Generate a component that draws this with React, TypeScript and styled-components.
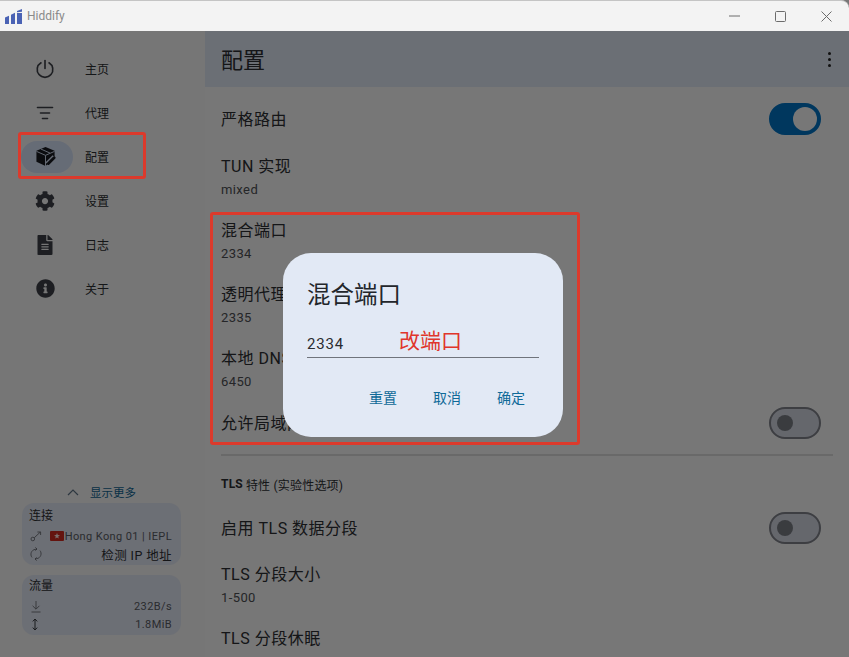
import React from "react";
import styled, { createGlobalStyle } from "styled-components";
import { FaCog, FaFileAlt, FaInfoCircle } from "react-icons/fa";

const FONT = `Roboto, "Noto Sans CJK SC", sans-serif`;

const GlobalStyle = createGlobalStyle`
  html, body {
    margin: 0;
    padding: 0;
    width: 849px;
    height: 657px;
    overflow: hidden;
    background: #777;
  }
  * { box-sizing: border-box; }
`;

const Window = styled.div`
  position: relative;
  width: 849px;
  height: 657px;
  display: flex;
  flex-direction: column;
  overflow: hidden;
  font-family: ${FONT};
  color: #2a2c30;
`;

const TitleBar = styled.div`
  height: 31px;
  flex: none;
  display: flex;
  align-items: center;
  background: #f3f3f3;
  border-top: 1px solid #c4c4c4;
  border-top-right-radius: 8px;
  padding-left: 5px;
  position: relative;
  z-index: 3;
`;

const AppName = styled.span`
  margin-left: 5px;
  font-size: 12px;
  color: #8a8a8a;
`;

const WindowControls = styled.div`
  margin-left: auto;
  display: flex;
  color: #6c6c6c;
`;

const WindowControl = styled.div`
  width: 46px;
  height: 30px;
  display: flex;
  align-items: center;
  justify-content: center;
`;

const Body = styled.div`
  flex: 1;
  min-height: 0;
  display: flex;
`;

const Sidebar = styled.aside`
  width: 205px;
  flex: none;
  display: flex;
  flex-direction: column;
  background: #ececec;
  padding: 16px 0 22px;
`;

const NavList = styled.nav`
  display: flex;
  flex-direction: column;
`;

const NavItem = styled.div`
  height: 44px;
  display: flex;
  align-items: center;
  padding-left: 21px;
  padding-bottom: 1px;
  font-size: 12px;
`;

const NavIcon = styled.div<{ $active?: boolean }>`
  width: 52px;
  height: 32px;
  border-radius: 16px;
  display: flex;
  align-items: center;
  justify-content: center;
  padding-right: 4px;
  margin-right: 12px;
  background: ${(p) => (p.$active ? "#cdd8ec" : "transparent")};
  color: #3a3d44;
`;

const BottomArea = styled.div`
  margin-top: auto;
  padding: 0 24px 0 22px;
  display: flex;
  flex-direction: column;
`;

const MoreLink = styled.div`
  height: 22px;
  display: flex;
  align-items: center;
  justify-content: center;
  gap: 11px;
  font-size: 11.5px;
  color: #0f5f8c;
`;

const StatsCard = styled.div<{ $tight?: boolean }>`
  border-radius: 12px;
  background: #d9deea;
  padding: ${(p) => (p.$tight ? "3px 9px 2px 8px" : "5px 9px 2px 8px")};
  margin-bottom: 10px;
  &:last-child { margin-bottom: 0; }
`;

const CardTitle = styled.div`
  font-size: 12px;
  line-height: 17px;
  margin-bottom: 2px;
  margin-left: -1px;
`;

const StatRow = styled.div`
  display: flex;
  align-items: center;
  justify-content: space-between;
  height: 18px;
  font-size: 11px;
  letter-spacing: 0.4px;
  color: #55585e;
`;

const StatIcon = styled.span`
  display: flex;
  width: 14px;
  color: #666a70;
`;

const StatValue = styled.span<{ $dark?: boolean }>`
  display: flex;
  align-items: center;
  gap: 1px;
  font-size: ${(p) => (p.$dark ? 12.5 : 11)}px;
  color: ${(p) => (p.$dark ? "#2a2c30" : "#55585e")};
`;

const Main = styled.main`
  flex: 1;
  min-width: 0;
  display: flex;
  flex-direction: column;
  background: #eeeeee;
  overflow: hidden;
`;

const Header = styled.header`
  height: 56px;
  flex: none;
  display: flex;
  align-items: center;
  justify-content: space-between;
  padding: 0 16px;
  background: #d7deea;
`;

const HeaderTitle = styled.div`
  font-size: 22px;
  margin-bottom: 3px;
`;

const Dots = styled.div`
  display: flex;
  flex-direction: column;
  gap: 3px;
  margin-right: 2.5px;
  span {
    width: 3px;
    height: 3px;
    border-radius: 50%;
    background: #222;
  }
`;

const SettingsList = styled.div`
  flex: 1;
  padding-top: 5px;
  display: flex;
  flex-direction: column;
`;

const Row = styled.div<{ $h: number }>`
  flex: none;
  height: ${(p) => p.$h}px;
  display: flex;
  align-items: center;
  justify-content: space-between;
  padding: 0 28px 0 16px;
  font-size: 16px;
  letter-spacing: 0.5px;
`;

const RowLabel = styled.span`
  margin-bottom: 2px;
`;

const RowText = styled.div`
  display: flex;
  flex-direction: column;
  gap: 3px;
`;

const RowTitle = styled.div`
  line-height: 20px;
`;

const RowValue = styled.div`
  font-size: 13px;
  line-height: 20px;
  letter-spacing: 0.4px;
  color: #4a4c50;
`;

const Divider = styled.hr`
  flex: none;
  border: 0;
  height: 2px;
  margin: 10px 16px 17px;
  background: #d2d2d2;
`;

const SectionTitle = styled.div`
  flex: none;
  height: 22px;
  display: flex;
  align-items: center;
  padding-left: 16px;
  margin-bottom: 6px;
  font-size: 12px;
  letter-spacing: 0.2px;
  b { font-weight: 700; margin-right: 3px; }
`;

const Switch = styled.div<{ $on?: boolean }>`
  width: 52px;
  height: 32px;
  flex: none;
  border-radius: 16px;
  display: flex;
  align-items: center;
  background: ${(p) => (p.$on ? "#016fbd" : "#cbced9")};
  border: 2px solid ${(p) => (p.$on ? "#016fbd" : "#7a7d85")};
  justify-content: ${(p) => (p.$on ? "flex-end" : "flex-start")};
  padding: ${(p) => (p.$on ? "0 2px" : "0 6px")};
  &::after {
    content: "";
    display: block;
    width: ${(p) => (p.$on ? 24 : 16)}px;
    height: ${(p) => (p.$on ? 24 : 16)}px;
    border-radius: 50%;
    background: ${(p) => (p.$on ? "#eeeeee" : "#74787f")};
  }
`;

const Scrim = styled.div`
  position: absolute;
  left: 0;
  right: 0;
  top: 31px;
  bottom: 0;
  background: rgba(0, 0, 0, 0.5);
`;

const Dialog = styled.div`
  position: absolute;
  left: 283px;
  top: 253px;
  width: 280px;
  height: 184px;
  border-radius: 28px;
  background: #e2e9f5;
  padding: 25px 24px 24px;
  display: flex;
  flex-direction: column;
`;

const DialogTitle = styled.div`
  font-size: 23.5px;
  line-height: 34px;
  color: #23262b;
`;

const Field = styled.div`
  margin-top: 14px;
  height: 32px;
  padding-top: 8px;
  border-bottom: 1px solid #70747c;
  font-size: 15px;
  line-height: 20px;
  letter-spacing: 0.8px;
  color: #2a2c30;
`;

const DialogActions = styled.div`
  margin-top: auto;
  margin-bottom: 5px;
  display: flex;
  justify-content: flex-end;
  gap: 36px;
  padding-right: 14px;
  font-size: 14px;
  line-height: 20px;
  color: #0f6a98;
`;

const FieldNote = styled.div`
  position: absolute;
  left: 399px;
  top: 327px;
  font-size: 21px;
  line-height: 28px;
  color: #e0352b;
`;

const Callout = styled.div<{ $x: number; $y: number; $w: number; $h: number }>`
  position: absolute;
  left: ${(p) => p.$x}px;
  top: ${(p) => p.$y}px;
  width: ${(p) => p.$w}px;
  height: ${(p) => p.$h}px;
  border: 3px solid #dc3a2c;
  border-radius: 3px;
`;

const Logo = () => (
  <svg width="17" height="15" viewBox="0 0 17 15">
    <g fill="#4a62b4">
      <path d="M0 8.6 L4 6.8 V15 H0 Z" />
      <path d="M6 5.8 L10 3.8 V15 H6 Z" />
      <rect x="12" y="4" width="5" height="11" />
      <path d="M12 2 L17 0 V2.8 L12 3.2 Z" />
    </g>
  </svg>
);

const PowerIcon = () => (
  <svg width="20" height="20" viewBox="0 0 22 22" fill="none" stroke="currentColor" strokeWidth="1.8" strokeLinecap="round">
    <path d="M6.6 4.2 A8.6 8.6 0 1 0 15.4 4.2" />
    <path d="M11 1.6 V10.4" />
  </svg>
);

const FilterIcon = () => (
  <svg width="20" height="16" viewBox="0 0 20 16" stroke="currentColor" strokeWidth="1.6" strokeLinecap="round">
    <path d="M2.5 2.5 H17.5" />
    <path d="M5.5 8 H14.5" />
    <path d="M7.5 13.5 H12.5" />
  </svg>
);

const BoxEditIcon = () => (
  <svg width="21" height="21" viewBox="0 0 22 22" fill="none">
    <path fill="#16181e" d="M11 1 L20.5 5 V13 L11 21 L1.5 16.5 V5 Z" />
    <path stroke="#cdd8ec" strokeWidth="1" d="M1.5 5.6 L11 9.8 L20.5 5.6 M11 9.8 V21 M6.2 3.2 L15.8 7.4" />
    <path stroke="#cdd8ec" strokeWidth="5.4" d="M20.4 11.6 L13 19" />
    <path stroke="#16181e" strokeWidth="3" strokeLinecap="round" d="M20 12.4 L14 18.4" />
  </svg>
);

const ChevronUp = () => (
  <svg width="12" height="8" viewBox="0 0 12 8" fill="none" stroke="#5b6f80" strokeWidth="1.2">
    <path d="M1 7 L6 2 L11 7" />
  </svg>
);

const LinkIcon = () => (
  <svg width="12" height="12" viewBox="0 0 12 12" fill="none" stroke="currentColor" strokeWidth="0.9">
    <circle cx="2.8" cy="9" r="1.8" />
    <path d="M4.2 7.8 L10.4 2 M7.4 2 H10.6 V5" />
  </svg>
);

const RefreshIcon = () => (
  <svg width="12" height="14" viewBox="0 0 12 14" fill="none" stroke="currentColor" strokeWidth="0.9">
    <path d="M2 10.4 A5 5 0 0 1 5 2.4 L7 2 M5.4 0.4 L7 2 L5.4 3.6" />
    <path d="M10 3.6 A5 5 0 0 1 7 11.6 L5 12 M6.6 10.4 L5 12 L6.6 13.6" />
  </svg>
);

const DownIcon = () => (
  <svg width="12" height="13" viewBox="0 0 12 13" fill="none" stroke="currentColor" strokeWidth="0.9">
    <path d="M6 1 V9 M2.6 5.8 L6 9.2 L9.4 5.8 M1.5 12 H10.5" />
  </svg>
);

const UpDownIcon = () => (
  <svg width="12" height="13" viewBox="0 0 12 13" fill="none" stroke="#33363b" strokeWidth="1">
    <path d="M5 1 V12 M2.8 3.4 L5 1 L7.2 3.4 M2.8 9.6 L5 12 L7.2 9.6" />
  </svg>
);

const HongKongFlag = () => (
  <svg width="14" height="10" viewBox="0 0 14 10">
    <rect width="14" height="10" rx="1" fill="#c8281e" />
    <path d="M7 2 L7.8 4 L10 4.2 L8.2 5.4 L8.8 7.6 L7 6.4 L5.2 7.6 L5.8 5.4 L4 4.2 L6.2 4 Z" fill="#f4dcd8" />
  </svg>
);

const navItems = [
  { label: "主页", icon: <PowerIcon /> },
  { label: "代理", icon: <FilterIcon /> },
  { label: "配置", icon: <BoxEditIcon />, active: true },
  { label: "设置", icon: <FaCog size={20} /> },
  { label: "日志", icon: <FaFileAlt size={20} /> },
  { label: "关于", icon: <FaInfoCircle size={19} /> },
];

const App: React.FC = () => {
  return (
    <Window>
      <GlobalStyle />
      <TitleBar>
        <Logo />
        <AppName>Hiddify</AppName>
        <WindowControls>
          <WindowControl>
            <svg width="11" height="2" viewBox="0 0 11 2" stroke="currentColor"><path d="M0 1 H11" /></svg>
          </WindowControl>
          <WindowControl>
            <svg width="11" height="11" viewBox="0 0 11 11" fill="none" stroke="currentColor"><rect x="0.5" y="0.5" width="10" height="10" rx="1" /></svg>
          </WindowControl>
          <WindowControl>
            <svg width="11" height="11" viewBox="0 0 11 11" stroke="currentColor"><path d="M0.5 0.5 L10.5 10.5 M10.5 0.5 L0.5 10.5" /></svg>
          </WindowControl>
        </WindowControls>
      </TitleBar>

      <Body>
        <Sidebar>
          <NavList>
            {navItems.map((item) => (
              <NavItem key={item.label}>
                <NavIcon $active={item.active}>{item.icon}</NavIcon>
                {item.label}
              </NavItem>
            ))}
          </NavList>

          <BottomArea>
            <MoreLink>
              <ChevronUp />
              显示更多
            </MoreLink>
            <StatsCard>
              <CardTitle>连接</CardTitle>
              <StatRow>
                <StatIcon><LinkIcon /></StatIcon>
                <StatValue><HongKongFlag />Hong Kong 01 | IEPL</StatValue>
              </StatRow>
              <StatRow>
                <StatIcon><RefreshIcon /></StatIcon>
                <StatValue $dark>检测 IP 地址</StatValue>
              </StatRow>
            </StatsCard>
            <StatsCard $tight>
              <CardTitle>流量</CardTitle>
              <StatRow>
                <StatIcon><DownIcon /></StatIcon>
                <StatValue>232B/s</StatValue>
              </StatRow>
              <StatRow>
                <StatIcon><UpDownIcon /></StatIcon>
                <StatValue>1.8MiB</StatValue>
              </StatRow>
            </StatsCard>
          </BottomArea>
        </Sidebar>

        <Main>
          <Header>
            <HeaderTitle>配置</HeaderTitle>
            <Dots><span /><span /><span /></Dots>
          </Header>
          <SettingsList>
            <Row $h={54}>
              <RowLabel>严格路由</RowLabel>
              <Switch $on />
            </Row>
            <Row $h={64}>
              <RowText><RowTitle>TUN 实现</RowTitle><RowValue>mixed</RowValue></RowText>
            </Row>
            <Row $h={64}>
              <RowText><RowTitle>混合端口</RowTitle><RowValue>2334</RowValue></RowText>
            </Row>
            <Row $h={64}>
              <RowText><RowTitle>透明代理端口</RowTitle><RowValue>2335</RowValue></RowText>
            </Row>
            <Row $h={64}>
              <RowText><RowTitle>本地 DNS 端口</RowTitle><RowValue>6450</RowValue></RowText>
            </Row>
            <Row $h={42}>
              <RowLabel>允许局域网连接</RowLabel>
              <Switch />
            </Row>
            <Divider />
            <SectionTitle><b>TLS</b> 特性 (实验性选项)</SectionTitle>
            <Row $h={53}>
              <RowLabel>启用 TLS 数据分段</RowLabel>
              <Switch />
            </Row>
            <Row $h={64}>
              <RowText><RowTitle>TLS 分段大小</RowTitle><RowValue>1-500</RowValue></RowText>
            </Row>
            <Row $h={64}>
              <RowText><RowTitle>TLS 分段休眠</RowTitle><RowValue>1-500</RowValue></RowText>
            </Row>
          </SettingsList>
        </Main>
      </Body>

      <Scrim />
      <Callout $x={18} $y={132} $w={128} $h={47} />
      <Callout $x={210} $y={212} $w={370} $h={233} />

      <Dialog>
        <DialogTitle>混合端口</DialogTitle>
        <Field>2334</Field>
        <DialogActions>
          <span>重置</span>
          <span>取消</span>
          <span>确定</span>
        </DialogActions>
      </Dialog>
      <FieldNote>改端口</FieldNote>
    </Window>
  );
};

export default App;
